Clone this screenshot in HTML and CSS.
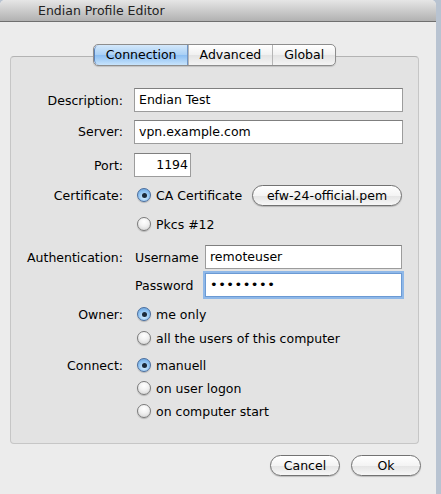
FILE: index.html
```html
<!DOCTYPE html>
<html>
<head>
<meta charset="utf-8">
<title>Endian Profile Editor</title>
<link rel="stylesheet" href="styles.css">
</head>
<body>
<div class="desk">
  <div class="window">
    <div class="titlebar">Endian Profile Editor</div>
    <div class="content">
      <div class="tabs">
        <span class="tab selected">Connection</span>
        <span class="tab">Advanced</span>
        <span class="tab">Global</span>
      </div>
      <div class="group">
        <div class="row r-desc">
          <label class="lbl">Description:</label>
          <div class="field wide">Endian Test</div>
        </div>
        <div class="row r-server">
          <label class="lbl">Server:</label>
          <div class="field wide">vpn.example.com</div>
        </div>
        <div class="row r-port">
          <label class="lbl">Port:</label>
          <div class="field port">1194</div>
        </div>
        <div class="row r-cert">
          <label class="lbl">Certificate:</label>
          <div class="opt"><span class="radio on"></span>CA Certificate</div>
          <span class="pill file">efw-24-official.pem</span>
        </div>
        <div class="row r-pkcs">
          <span class="lbl"></span>
          <div class="opt"><span class="radio"></span>Pkcs #12</div>
        </div>
        <div class="row r-auth">
          <label class="lbl">Authentication:</label>
          <span class="sublbl">Username</span>
          <div class="field user">remoteuser</div>
        </div>
        <div class="row r-pass">
          <span class="lbl"></span>
          <span class="sublbl">Password</span>
          <div class="field user focus">&#8226;&#8226;&#8226;&#8226;&#8226;&#8226;&#8226;&#8226;</div>
        </div>
        <div class="row r-owner">
          <label class="lbl">Owner:</label>
          <div class="opt"><span class="radio on"></span>me only</div>
        </div>
        <div class="row r-all">
          <span class="lbl"></span>
          <div class="opt"><span class="radio"></span>all the users of this computer</div>
        </div>
        <div class="row r-connect">
          <label class="lbl">Connect:</label>
          <div class="opt"><span class="radio on"></span>manuell</div>
        </div>
        <div class="row r-sub2">
          <span class="lbl"></span>
          <div class="opt"><span class="radio"></span>on user logon</div>
        </div>
        <div class="row r-sub2">
          <span class="lbl"></span>
          <div class="opt"><span class="radio"></span>on computer start</div>
        </div>
      </div>
      <div class="actions">
        <span class="pill btn cancel">Cancel</span>
        <span class="pill btn ok">Ok</span>
      </div>
    </div>
  </div>
</div>
</body>
</html>
```
FILE: styles.css
```css
html, body {
  margin: 0;
  padding: 0;
}

body {
  font-family: "DejaVu Sans", "Liberation Sans", sans-serif;
  font-size: 12.5px;
  color: #000;
  background: #b8c3d1;
}

.desk {
  width: 441px;
  height: 494px;
  overflow: hidden;
}

.window {
  width: 436px;
  height: 494px;
  background: #ececec;
  border-top-right-radius: 5px;
  border-top-left-radius: 5px;
  overflow: hidden;
}

.titlebar {
  height: 21px;
  line-height: 22px;
  padding-left: 38px;
  background: linear-gradient(#e6e6e6, #b1b1b1);
  border-bottom: 1px solid #6f6f6f;
  font-size: 12.5px;
  color: #222;
}

.content {
  padding: 22px 17px 0 10px;
}

/* segmented tab control */
.tabs {
  position: relative;
  z-index: 1;
  display: flex;
  width: max-content;
  margin: 0 auto -10px;
  padding-left: 1px;
  height: 20px;
  border: 1px solid #8d8d8d;
  border-radius: 5px;
  background: linear-gradient(#ffffff, #f0f0f0 50%, #e3e3e3 51%, #f4f4f4);
  box-shadow: 0 1px 1px rgba(0,0,0,0.15);
  overflow: hidden;
}

.tab {
  line-height: 20px;
  padding: 0 11px;
  border-left: 1px solid #b5b5b5;
}

.tab:first-child {
  border-left: none;
}

.tab.selected {
  padding: 0 10px 0 11px;
  margin-left: -1px;
  background: linear-gradient(#d4e8fb, #a8cff5 50%, #8bbef2 51%, #c8e4fc);
  border-right: 1px solid #6f94c4;
  border-left: 1px solid #5a83bb;
  border-radius: 5px 0 0 5px;
}

.group {
  height: 366px;
  padding-top: 20px;
  background: #e3e3e3;
  border: 1px solid #c6c6c6;
  border-top-color: #b3b3b3;
  border-radius: 4px;
}

.row {
  display: flex;
  align-items: center;
}

.lbl {
  width: 112px;
  flex: none;
  text-align: right;
  margin-right: 11px;
}

.field {
  line-height: 22px;
  padding: 0 4px;
  background: #fff;
  border: 1px solid #9c9c9c;
  border-top-color: #7f7f7f;
  box-sizing: border-box;
  height: 24px;
  white-space: nowrap;
}

.field.wide {
  width: 269px;
}

.field.port {
  width: 57px;
  text-align: right;
  padding-right: 2px;
}

.field.user {
  width: 197px;
  margin-left: auto;
  margin-right: 16px;
}

.field.focus {
  border: 1px solid #6b9ad4;
  box-shadow: 0 0 0 2px #8fb8e8;
  letter-spacing: 0.5px;
  font-size: 13px;
}

.r-desc { height: 24px; margin-top: 11px; }
.r-server { height: 23px; margin-top: 8px; }
.r-port { height: 24px; margin-top: 10px; }
.r-cert { height: 24px; margin-top: 6px; }
.r-pkcs { height: 20px; margin-top: 7px; }
.r-auth { height: 24px; margin-top: 11px; }
.r-pass { height: 24px; margin-top: 4px; }
.r-owner { height: 20px; margin-top: 7px; }
.r-all { height: 20px; margin-top: 4px; }
.r-connect { height: 20px; margin-top: 7px; }
.r-sub2 { height: 20px; margin-top: 3px; }

.sublbl {
  margin-left: 1px;
}

.opt {
  display: flex;
  align-items: center;
  padding-left: 3px;
}

.radio {
  width: 12px;
  height: 12px;
  margin-right: 5px;
  border-radius: 50%;
  border: 1px solid #7a7a7a;
  background: radial-gradient(circle at 50% 30%, #ffffff, #f1f1f1 45%, #cfcfcf 100%);
  box-shadow: 0 1px 1px rgba(0,0,0,0.2);
  position: relative;
}

.radio.on {
  border-color: #4a6e9e;
  background: radial-gradient(circle at 50% 70%, #d3ecff, #8fc3f2 55%, #5c97d6 100%);
}

.radio.on::after {
  content: "";
  position: absolute;
  left: 3.5px;
  top: 3.5px;
  width: 5px;
  height: 5px;
  border-radius: 50%;
  background: #1b2a3a;
}

.pill {
  display: inline-block;
  height: 21px;
  line-height: 20px;
  box-sizing: border-box;
  border: 1px solid #727272;
  border-radius: 11px;
  background: linear-gradient(#ffffff, #f4f4f4 50%, #e4e4e4 51%, #f7f7f7);
  box-shadow: 0 1px 1px rgba(0,0,0,0.2);
  text-align: center;
}

.pill.file {
  width: 150px;
  margin-left: auto;
  margin-right: 16px;
}

.actions {
  display: flex;
  justify-content: flex-end;
  gap: 11px;
  margin-top: 11px;
}

.btn.cancel {
  width: 70px;
}

.btn.ok {
  width: 70px;
  margin-right: -2px;
}
```
